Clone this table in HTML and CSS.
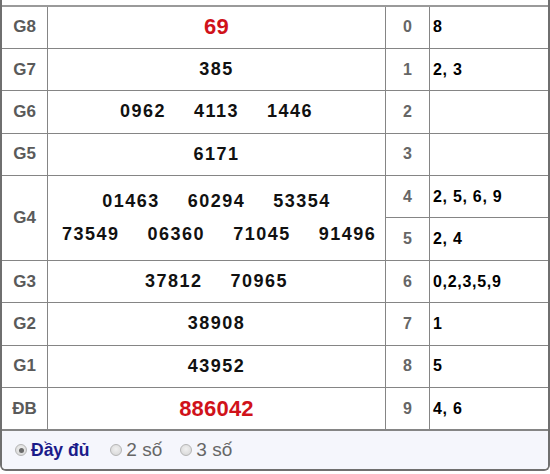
FILE: index.html
```
<!DOCTYPE html>
<html lang="vi">
<head>
<meta charset="utf-8">
<link rel="stylesheet" href="styles.css">
</head>
<body>
<div class="box">
  <div class="spacer"></div>
  <table class="kq">
    <tr>
      <td class="lbl">G8</td><td class="num big">69</td>
      <td class="dg">0</td><td class="tail">8</td>
    </tr>
    <tr>
      <td class="lbl">G7</td><td class="num">385</td>
      <td class="dg">1</td><td class="tail">2, 3</td>
    </tr>
    <tr>
      <td class="lbl">G6</td><td class="num"><span>0962</span><span>4113</span><span>1446</span></td>
      <td class="dg">2</td><td class="tail"></td>
    </tr>
    <tr>
      <td class="lbl">G5</td><td class="num">6171</td>
      <td class="dg">3</td><td class="tail"></td>
    </tr>
    <tr>
      <td class="lbl" rowspan="2">G4</td>
      <td class="num g4" rowspan="2">
        <div class="line"><span>01463</span><span>60294</span><span>53354</span></div>
        <div class="line"><span>73549</span><span>06360</span><span>71045</span><span>91496</span></div>
      </td>
      <td class="dg">4</td><td class="tail">2, 5, 6, 9</td>
    </tr>
    <tr>
      <td class="dg">5</td><td class="tail">2, 4</td>
    </tr>
    <tr>
      <td class="lbl">G3</td><td class="num"><span>37812</span><span>70965</span></td>
      <td class="dg">6</td><td class="tail">0,2,3,5,9</td>
    </tr>
    <tr>
      <td class="lbl">G2</td><td class="num">38908</td>
      <td class="dg">7</td><td class="tail">1</td>
    </tr>
    <tr>
      <td class="lbl">G1</td><td class="num">43952</td>
      <td class="dg">8</td><td class="tail">5</td>
    </tr>
    <tr>
      <td class="lbl">ĐB</td><td class="num big">886042</td>
      <td class="dg">9</td><td class="tail">4, 6</td>
    </tr>
  </table>
  <div class="foot">
    <label class="opt on"><span class="radio checked"></span>Đầy đủ</label>
    <label class="opt"><span class="radio"></span>2 số</label>
    <label class="opt"><span class="radio"></span>3 số</label>
  </div>
</div>
</body>
</html>
```
FILE: styles.css
```
html, body {
  margin: 0;
  padding: 0;
  background: #fff;
  font-family: "Liberation Sans", Arial, sans-serif;
}
.box {
  width: 550px;
  height: 471px;
  box-sizing: border-box;
  border: 2px solid #6f6f6f;
  border-top: none;
  border-radius: 0 0 6px 6px;
  overflow: hidden;
  display: flex;
  flex-direction: column;
}
.spacer {
  height: 5px;
  flex: none;
}
.kq {
  width: 546px;
  border-collapse: collapse;
  table-layout: fixed;
  flex: none;
}
.kq tr {
  height: 42.4px;
}
.kq td {
  border: 1px solid #858585;
  padding: 0;
  text-align: center;
  vertical-align: middle;
}
.kq tr:first-child td {
  border-top: 2px solid #9a9a9a;
}
.kq td:first-child.lbl {
  border-left: none;
  width: 45px;
}
.kq td.tail {
  border-right: none;
  text-align: left;
  padding-left: 3px;
  font-size: 16px;
  font-weight: bold;
  letter-spacing: 0.7px;
  color: #000;
}
.lbl {
  font-size: 17px;
  font-weight: bold;
  color: #5a5a5a;
}
.num {
  width: 337px;
  font-size: 18px;
  font-weight: bold;
  letter-spacing: 1.5px;
  color: #111;
}
.num span {
  margin: 0 14px;
}
.num.big {
  font-size: 22px;
  letter-spacing: 0.2px;
  color: #d0121a;
}
.g4 .line {
  height: 33px;
  line-height: 33px;
}
.g4 .line:first-child {
  margin-top: 1px;
}
.dg {
  width: 43px;
  font-size: 16px;
  font-weight: bold;
  color: #666;
}
.foot {
  flex: 1;
  background: #f5f6fc;
  display: flex;
  align-items: center;
  padding-left: 13px;
  border-top: 1px solid #858585;
}
.opt {
  display: flex;
  align-items: center;
  font-size: 19px;
  color: #666;
  margin-right: 18px;
}
.opt.on {
  font-size: 17.5px;
  font-weight: bold;
  color: #1b1b8a;
  margin-right: 21px;
}
.radio {
  width: 12px;
  height: 12px;
  border-radius: 50%;
  border: 1px solid #b5b5b5;
  background: radial-gradient(circle at 50% 40%, #f0f0f0, #d4d4d4);
  margin-right: 4px;
  position: relative;
  box-sizing: border-box;
}
.radio.checked::after {
  content: "";
  position: absolute;
  left: 2.5px;
  top: 2.5px;
  width: 5px;
  height: 5px;
  border-radius: 50%;
  background: #6a6a6a;
}
```
